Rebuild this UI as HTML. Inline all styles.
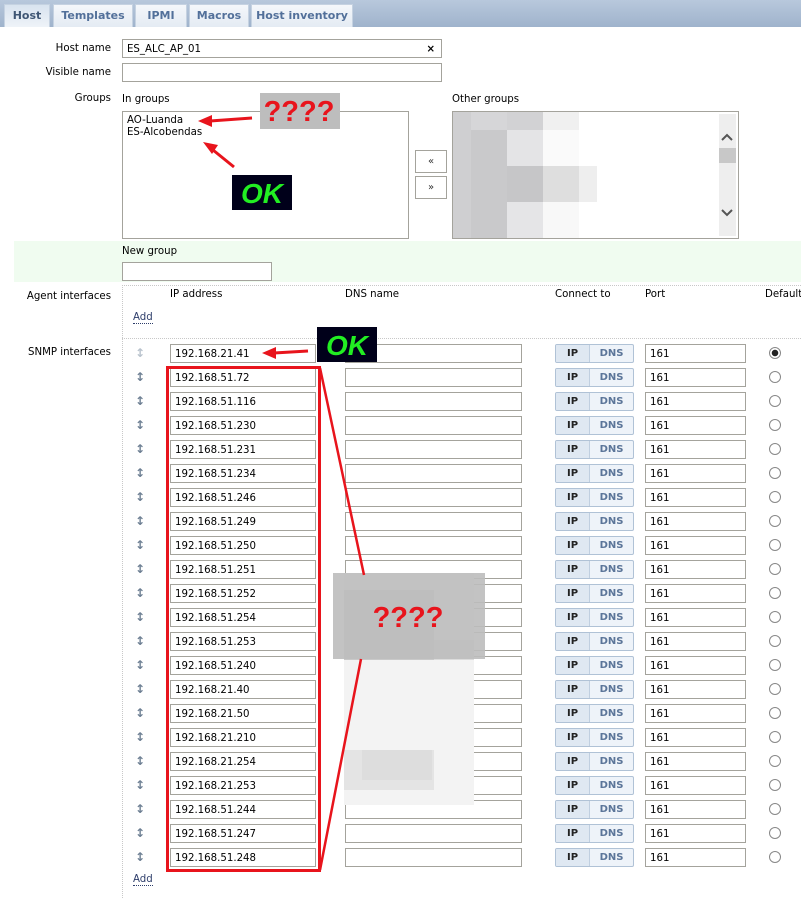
<!DOCTYPE html>
<html><head><meta charset="utf-8"><style>
*{box-sizing:border-box}
body{margin:0;width:801px;height:898px;overflow:hidden;background:#fff;font-family:"DejaVu Sans",Verdana,"Liberation Sans",sans-serif;font-size:10.2px;color:#000;position:relative}
.a{position:absolute}
.tabbar{left:0;top:0;width:801px;height:27px;background:linear-gradient(#b8c8dc,#9fb3cc)}
.tab{top:4px;height:23px;background:linear-gradient(#f4f7fb,#e4ebf3);border:1px solid #c5d2e1;border-bottom:none;color:#52709a;font-weight:bold;font-size:11px;line-height:21px;text-align:center}
.lbl{text-align:right;width:111px;left:0}
.in{border:1px solid #a4a39c;background:#fff;height:19px;line-height:16px;padding:2px 0 0 4px;font-size:10.2px}
.btn{border:1px solid #a4a39c;background:#fff;text-align:center;font-size:10px;color:#333}
.dot{border-top:1px dotted #c8c8c8;height:0}
.sw{border:1px solid #b0c2d6;border-radius:2px;background:#eef3f9;height:19px;width:79px;font-weight:bold;font-size:10px;line-height:17px;overflow:hidden}
.sw span{display:inline-block;text-align:center;height:17px}
.sw span.ip{background:#dfe8f2;border-right:1px solid #c0cfe0}
.rad{width:12px;height:12px;border:1px solid #888;border-radius:50%;background:#fff}
.arr{color:#6d7f93;font-size:12px;font-weight:bold}
.r{position:relative;height:24px}.r>*{position:absolute;top:0}
</style></head><body>
<div class="a tabbar"></div>
<div class="a tab" style="left:4px;width:46px;color:#3f5674;background:linear-gradient(#d8e3ef,#eef3f8)">Host</div>
<div class="a tab" style="left:53px;width:80px">Templates</div>
<div class="a tab" style="left:135px;width:52px">IPMI</div>
<div class="a tab" style="left:189px;width:60px">Macros</div>
<div class="a tab" style="left:251px;width:102px">Host inventory</div>

<div class="a lbl" style="top:43px">Host name</div>
<div class="a in" style="left:122px;top:39px;width:320px">ES_ALC_AP_01<span style="position:absolute;right:6px;font-weight:bold">×</span></div>
<div class="a lbl" style="top:67px">Visible name</div>
<div class="a in" style="left:122px;top:63px;width:320px"></div>
<div class="a lbl" style="top:93px">Groups</div>
<div class="a" style="left:122px;top:94px">In groups</div>
<div class="a" style="left:452px;top:94px">Other groups</div>
<div class="a" style="left:122px;top:111px;width:287px;height:128px;border:1px solid #a4a39c;padding:3px 4px;line-height:12px">AO-Luanda<br>ES-Alcobendas</div>
<div class="a btn" style="left:415px;top:150px;width:32px;height:23px;line-height:21px">«</div>
<div class="a btn" style="left:415px;top:176px;width:32px;height:23px;line-height:21px">»</div>
<div class="a" style="left:452px;top:111px;width:287px;height:128px;border:1px solid #a4a39c;overflow:hidden">
 <svg width="287" height="128" style="display:block">
  <rect x="0" y="0" width="18" height="126" fill="#cfcfd1"/>
  <rect x="18" y="0" width="36" height="18" fill="#d6d6d8"/><rect x="54" y="0" width="36" height="18" fill="#d2d2d4"/><rect x="90" y="0" width="36" height="18" fill="#f0f0f0"/>
  <rect x="18" y="18" width="36" height="108" fill="#c9c9cb"/><rect x="54" y="18" width="36" height="36" fill="#e4e4e6"/><rect x="90" y="18" width="36" height="36" fill="#fafafa"/>
  <rect x="54" y="54" width="36" height="36" fill="#c6c6c8"/><rect x="90" y="54" width="36" height="36" fill="#dedede"/><rect x="126" y="54" width="18" height="36" fill="#eeeeee"/>
  <rect x="54" y="90" width="36" height="36" fill="#e5e5e7"/><rect x="90" y="90" width="36" height="36" fill="#f8f8f8"/>
  <rect x="266" y="2" width="17" height="122" fill="#eeeeee"/>
  <rect x="266" y="36" width="17" height="15" fill="#c8c8c8"/>
  <path d="M269 28l5-5 5 5" stroke="#555" stroke-width="2" fill="none"/>
  <path d="M269 98l5 5 5-5" stroke="#555" stroke-width="2" fill="none"/>
 </svg>
</div>

<div class="a" style="left:14px;top:241px;width:787px;height:41px;background:#f0fcf0"></div>
<div class="a" style="left:122px;top:246px">New group</div>
<div class="a in" style="left:122px;top:262px;width:150px"></div>

<div class="a dot" style="left:122px;top:285px;width:679px"></div>
<div class="a" style="left:122px;top:285px;height:613px;border-left:1px dotted #c8c8c8"></div>
<div class="a lbl" style="top:291px">Agent interfaces</div>
<div class="a" style="left:170px;top:289px">IP address</div>
<div class="a" style="left:345px;top:289px">DNS name</div>
<div class="a" style="left:555px;top:289px">Connect to</div>
<div class="a" style="left:645px;top:289px">Port</div>
<div class="a" style="left:765px;top:289px">Default</div>
<div class="a" style="left:133px;top:312px;color:#2d3d6a;border-bottom:1px dotted #2d3d6a">Add</div>
<div class="a dot" style="left:122px;top:338px;width:679px"></div>
<div class="a lbl" style="top:347px">SNMP interfaces</div>
<div class="a" style="left:133px;top:874px;color:#2d3d6a;border-bottom:1px dotted #2d3d6a">Add</div>

<div class="a" style="left:0;top:344px;width:801px">
<div class="r"><span class="arr" style="left:135px;top:2px;color:#b9c3cd">↕</span><div class="in" style="left:170px;width:146px">192.168.21.41</div><div class="in" style="left:345px;width:177px"></div><div class="sw" style="left:555px"><span class="ip" style="width:34px;color:#222">IP</span><span style="width:43px;color:#5b7599">DNS</span></div><div class="in" style="left:645px;width:101px">161</div><div class="rad" style="left:769px;top:3px;background:radial-gradient(#222 0 3px,#fff 3.5px)"></div></div>
<div class="r"><span class="arr" style="left:135px;top:2px">↕</span><div class="in" style="left:170px;width:146px">192.168.51.72</div><div class="in" style="left:345px;width:177px"></div><div class="sw" style="left:555px"><span class="ip" style="width:34px;color:#222">IP</span><span style="width:43px;color:#5b7599">DNS</span></div><div class="in" style="left:645px;width:101px">161</div><div class="rad" style="left:769px;top:3px"></div></div>
<div class="r"><span class="arr" style="left:135px;top:2px">↕</span><div class="in" style="left:170px;width:146px">192.168.51.116</div><div class="in" style="left:345px;width:177px"></div><div class="sw" style="left:555px"><span class="ip" style="width:34px;color:#222">IP</span><span style="width:43px;color:#5b7599">DNS</span></div><div class="in" style="left:645px;width:101px">161</div><div class="rad" style="left:769px;top:3px"></div></div>
<div class="r"><span class="arr" style="left:135px;top:2px">↕</span><div class="in" style="left:170px;width:146px">192.168.51.230</div><div class="in" style="left:345px;width:177px"></div><div class="sw" style="left:555px"><span class="ip" style="width:34px;color:#222">IP</span><span style="width:43px;color:#5b7599">DNS</span></div><div class="in" style="left:645px;width:101px">161</div><div class="rad" style="left:769px;top:3px"></div></div>
<div class="r"><span class="arr" style="left:135px;top:2px">↕</span><div class="in" style="left:170px;width:146px">192.168.51.231</div><div class="in" style="left:345px;width:177px"></div><div class="sw" style="left:555px"><span class="ip" style="width:34px;color:#222">IP</span><span style="width:43px;color:#5b7599">DNS</span></div><div class="in" style="left:645px;width:101px">161</div><div class="rad" style="left:769px;top:3px"></div></div>
<div class="r"><span class="arr" style="left:135px;top:2px">↕</span><div class="in" style="left:170px;width:146px">192.168.51.234</div><div class="in" style="left:345px;width:177px"></div><div class="sw" style="left:555px"><span class="ip" style="width:34px;color:#222">IP</span><span style="width:43px;color:#5b7599">DNS</span></div><div class="in" style="left:645px;width:101px">161</div><div class="rad" style="left:769px;top:3px"></div></div>
<div class="r"><span class="arr" style="left:135px;top:2px">↕</span><div class="in" style="left:170px;width:146px">192.168.51.246</div><div class="in" style="left:345px;width:177px"></div><div class="sw" style="left:555px"><span class="ip" style="width:34px;color:#222">IP</span><span style="width:43px;color:#5b7599">DNS</span></div><div class="in" style="left:645px;width:101px">161</div><div class="rad" style="left:769px;top:3px"></div></div>
<div class="r"><span class="arr" style="left:135px;top:2px">↕</span><div class="in" style="left:170px;width:146px">192.168.51.249</div><div class="in" style="left:345px;width:177px"></div><div class="sw" style="left:555px"><span class="ip" style="width:34px;color:#222">IP</span><span style="width:43px;color:#5b7599">DNS</span></div><div class="in" style="left:645px;width:101px">161</div><div class="rad" style="left:769px;top:3px"></div></div>
<div class="r"><span class="arr" style="left:135px;top:2px">↕</span><div class="in" style="left:170px;width:146px">192.168.51.250</div><div class="in" style="left:345px;width:177px"></div><div class="sw" style="left:555px"><span class="ip" style="width:34px;color:#222">IP</span><span style="width:43px;color:#5b7599">DNS</span></div><div class="in" style="left:645px;width:101px">161</div><div class="rad" style="left:769px;top:3px"></div></div>
<div class="r"><span class="arr" style="left:135px;top:2px">↕</span><div class="in" style="left:170px;width:146px">192.168.51.251</div><div class="in" style="left:345px;width:177px"></div><div class="sw" style="left:555px"><span class="ip" style="width:34px;color:#222">IP</span><span style="width:43px;color:#5b7599">DNS</span></div><div class="in" style="left:645px;width:101px">161</div><div class="rad" style="left:769px;top:3px"></div></div>
<div class="r"><span class="arr" style="left:135px;top:2px">↕</span><div class="in" style="left:170px;width:146px">192.168.51.252</div><div class="in" style="left:345px;width:177px"></div><div class="sw" style="left:555px"><span class="ip" style="width:34px;color:#222">IP</span><span style="width:43px;color:#5b7599">DNS</span></div><div class="in" style="left:645px;width:101px">161</div><div class="rad" style="left:769px;top:3px"></div></div>
<div class="r"><span class="arr" style="left:135px;top:2px">↕</span><div class="in" style="left:170px;width:146px">192.168.51.254</div><div class="in" style="left:345px;width:177px"></div><div class="sw" style="left:555px"><span class="ip" style="width:34px;color:#222">IP</span><span style="width:43px;color:#5b7599">DNS</span></div><div class="in" style="left:645px;width:101px">161</div><div class="rad" style="left:769px;top:3px"></div></div>
<div class="r"><span class="arr" style="left:135px;top:2px">↕</span><div class="in" style="left:170px;width:146px">192.168.51.253</div><div class="in" style="left:345px;width:177px"></div><div class="sw" style="left:555px"><span class="ip" style="width:34px;color:#222">IP</span><span style="width:43px;color:#5b7599">DNS</span></div><div class="in" style="left:645px;width:101px">161</div><div class="rad" style="left:769px;top:3px"></div></div>
<div class="r"><span class="arr" style="left:135px;top:2px">↕</span><div class="in" style="left:170px;width:146px">192.168.51.240</div><div class="in" style="left:345px;width:177px"></div><div class="sw" style="left:555px"><span class="ip" style="width:34px;color:#222">IP</span><span style="width:43px;color:#5b7599">DNS</span></div><div class="in" style="left:645px;width:101px">161</div><div class="rad" style="left:769px;top:3px"></div></div>
<div class="r"><span class="arr" style="left:135px;top:2px">↕</span><div class="in" style="left:170px;width:146px">192.168.21.40</div><div class="in" style="left:345px;width:177px"></div><div class="sw" style="left:555px"><span class="ip" style="width:34px;color:#222">IP</span><span style="width:43px;color:#5b7599">DNS</span></div><div class="in" style="left:645px;width:101px">161</div><div class="rad" style="left:769px;top:3px"></div></div>
<div class="r"><span class="arr" style="left:135px;top:2px">↕</span><div class="in" style="left:170px;width:146px">192.168.21.50</div><div class="in" style="left:345px;width:177px"></div><div class="sw" style="left:555px"><span class="ip" style="width:34px;color:#222">IP</span><span style="width:43px;color:#5b7599">DNS</span></div><div class="in" style="left:645px;width:101px">161</div><div class="rad" style="left:769px;top:3px"></div></div>
<div class="r"><span class="arr" style="left:135px;top:2px">↕</span><div class="in" style="left:170px;width:146px">192.168.21.210</div><div class="in" style="left:345px;width:177px"></div><div class="sw" style="left:555px"><span class="ip" style="width:34px;color:#222">IP</span><span style="width:43px;color:#5b7599">DNS</span></div><div class="in" style="left:645px;width:101px">161</div><div class="rad" style="left:769px;top:3px"></div></div>
<div class="r"><span class="arr" style="left:135px;top:2px">↕</span><div class="in" style="left:170px;width:146px">192.168.21.254</div><div class="in" style="left:345px;width:177px"></div><div class="sw" style="left:555px"><span class="ip" style="width:34px;color:#222">IP</span><span style="width:43px;color:#5b7599">DNS</span></div><div class="in" style="left:645px;width:101px">161</div><div class="rad" style="left:769px;top:3px"></div></div>
<div class="r"><span class="arr" style="left:135px;top:2px">↕</span><div class="in" style="left:170px;width:146px">192.168.21.253</div><div class="in" style="left:345px;width:177px"></div><div class="sw" style="left:555px"><span class="ip" style="width:34px;color:#222">IP</span><span style="width:43px;color:#5b7599">DNS</span></div><div class="in" style="left:645px;width:101px">161</div><div class="rad" style="left:769px;top:3px"></div></div>
<div class="r"><span class="arr" style="left:135px;top:2px">↕</span><div class="in" style="left:170px;width:146px">192.168.51.244</div><div class="in" style="left:345px;width:177px"></div><div class="sw" style="left:555px"><span class="ip" style="width:34px;color:#222">IP</span><span style="width:43px;color:#5b7599">DNS</span></div><div class="in" style="left:645px;width:101px">161</div><div class="rad" style="left:769px;top:3px"></div></div>
<div class="r"><span class="arr" style="left:135px;top:2px">↕</span><div class="in" style="left:170px;width:146px">192.168.51.247</div><div class="in" style="left:345px;width:177px"></div><div class="sw" style="left:555px"><span class="ip" style="width:34px;color:#222">IP</span><span style="width:43px;color:#5b7599">DNS</span></div><div class="in" style="left:645px;width:101px">161</div><div class="rad" style="left:769px;top:3px"></div></div>
<div class="r"><span class="arr" style="left:135px;top:2px">↕</span><div class="in" style="left:170px;width:146px">192.168.51.248</div><div class="in" style="left:345px;width:177px"></div><div class="sw" style="left:555px"><span class="ip" style="width:34px;color:#222">IP</span><span style="width:43px;color:#5b7599">DNS</span></div><div class="in" style="left:645px;width:101px">161</div><div class="rad" style="left:769px;top:3px"></div></div>
</div>

<svg class="a" style="left:0;top:0" width="801" height="898">
 <rect x="344" y="573" width="130" height="232" fill="#f3f3f3"/>
 <rect x="344" y="590" width="90" height="70" fill="#c9c9c9"/>
 <rect x="434" y="640" width="40" height="20" fill="#dcdcdc"/>
 <rect x="344" y="750" width="90" height="40" fill="#e4e4e4"/>
 <rect x="362" y="750" width="70" height="30" fill="#dddddd"/>
 <rect x="333" y="573" width="152" height="86" fill="#bdbdbd" opacity="0.9"/>
 <text x="408" y="627" font-family="Liberation Sans, sans-serif" font-size="29" font-weight="bold" fill="#e8141c" text-anchor="middle">????</text>
 <rect x="167.5" y="367.5" width="152" height="503" fill="none" stroke="#e8141c" stroke-width="3"/>
 <path d="M320 368L364 575M320 870L361 659" stroke="#e8141c" stroke-width="2.5" fill="none"/>
 <rect x="260" y="93" width="80" height="36" fill="#bdbdbd"/>
 <text x="299" y="121" font-family="Liberation Sans, sans-serif" font-size="29" font-weight="bold" fill="#e8141c" text-anchor="middle">????</text>
 <path d="M252 118L210 121" stroke="#e8141c" stroke-width="3"/>
 <path d="M198 121l14-6v12z" fill="#e8141c"/>
 <path d="M234 167L213 150" stroke="#e8141c" stroke-width="3"/>
 <path d="M203 142l15 3-6 9z" fill="#e8141c"/>
 <rect x="232" y="175" width="60" height="35" fill="#00001a"/>
 <text x="262" y="203" font-family="Liberation Sans, sans-serif" font-size="28" font-weight="bold" font-style="italic" fill="#22ee22" text-anchor="middle">OK</text>
 <rect x="317" y="327" width="60" height="35" fill="#00001a"/>
 <text x="347" y="355" font-family="Liberation Sans, sans-serif" font-size="28" font-weight="bold" font-style="italic" fill="#22ee22" text-anchor="middle">OK</text>
 <path d="M308 351L274 353" stroke="#e8141c" stroke-width="3"/>
 <path d="M262 353l14-6v12z" fill="#e8141c"/>
</svg>
</body></html>
